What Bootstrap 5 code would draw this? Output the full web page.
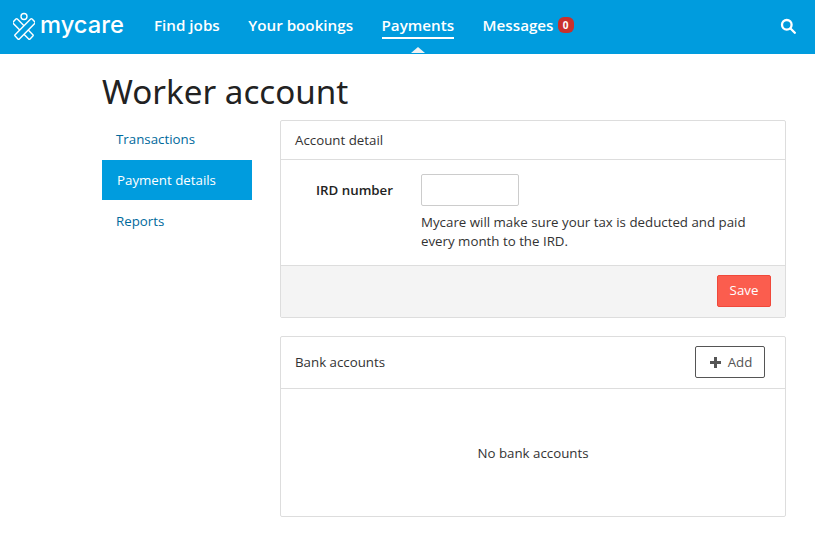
<!DOCTYPE html>
<html lang="en">
<head>
<meta charset="utf-8">
<title>Worker account</title>
<link rel="stylesheet" href="https://cdn.jsdelivr.net/npm/bootstrap@5.3.0/dist/css/bootstrap.min.css">
<style>
html,body{height:533px;overflow:hidden}
body{font-family:"Open Sans",sans-serif;font-size:13.3px;color:#333;background:#fff}
.top-bar{height:54px;background:#009cde;padding:0 19px 0 13px}
.brand-link{color:#fff;text-decoration:none;font-family:"Inter",sans-serif;font-size:23.700px;font-weight:500;line-height:1;gap:5px;width:141px;margin-top:-2px}
.brand-link:hover{color:#fff}
.brand-link span{margin-top:-3px}
.brand-link svg{flex:none}
.top-links{gap:28.500px;height:54px}
.top-link{color:#fff;font-size:15.200px;font-weight:600;text-decoration:none;line-height:20px;padding-bottom:2px;border-bottom:2px solid transparent;position:relative;display:block}
.top-link:hover{color:#fff}
.top-link.on{border-bottom-color:#fff}
.top-link.on::after{content:"";position:absolute;left:50%;margin-left:-7px;top:32px;border:7px solid transparent;border-top:0;border-bottom:6px solid #f2f2f2}
.count-pill{background:#c9302c;color:#fff;font-size:10px;font-weight:700;border-radius:6px;padding:0;width:16px;height:16px;line-height:16px;text-align:center;margin-left:4px;display:inline-block;vertical-align:2px}
.find-icon{margin-top:-2px}
.page-wrap{padding:0 29px 0 102px}
.page-title{font-family:"Noto Sans",sans-serif;font-size:33.200px;font-weight:400;color:#222;line-height:44px;margin:16px 0 6px}
.side-col{width:150px;flex:none;margin-right:28px;margin-top:-1px}
.side-link{display:block;height:40px;line-height:40px;padding-left:14px;margin-bottom:1px;color:#006a9c;text-decoration:none}
.side-link.on{background:#009cde;color:#fff;padding-left:15px}
.main-col{flex:1;min-width:0}
.panel-box{border:1px solid #ddd;border-radius:2px;margin-bottom:18px;background:#fff}
.panel-head{height:39px;line-height:38px;padding:0 14px;border-bottom:1px solid #ddd;color:#333}
.panel-body{height:105px;padding:14px 0 0 35px}
.field-label{width:105px;flex:none;font-weight:600;margin-top:7px;line-height:18px;color:#222}
.ird-input{width:98px;height:32px;border:1px solid #ccc;border-radius:2px;padding:0 6px;display:block;margin-bottom:7px;outline:0}
.help-note{line-height:19px;margin:0;width:345px;color:#333}
.panel-foot{height:52px;background:#f4f4f4;border-top:1px solid #ddd;padding:9px 14px 0 0;text-align:right}
.save-btn{background:#fb5d4e;border:1px solid #f0483a;color:#fff;width:54px;height:32px;padding:0;font-size:13.300px;border-radius:2px}
.save-btn:hover{background:#fb5d4e;color:#fff}
.head-tall{height:52px;padding:9px 20px 0 14px;line-height:32px}
.add-btn{border:1px solid #555;color:#555;background:#fff;width:70px;height:32px;padding:1px 0 0 2px;font-size:13.300px;border-radius:2px;line-height:1}
.add-btn svg{margin-right:7px;vertical-align:-1px}
.empty-body{height:127px;line-height:128px;text-align:center}
</style>
</head>
<body>
<nav class="top-bar d-flex align-items-center">
  <a class="brand-link d-flex align-items-center" href="#">
    <svg width="22" height="28" viewBox="0 0 22 28" stroke="#fff" stroke-width="1.400" stroke-linejoin="round"><circle cx="11" cy="4.500" r="3" fill="none"/><rect x="-2" y="14" width="24" height="6" rx="1" fill="#009cde" transform="rotate(45 10 17)"/><rect x="0" y="14" width="24" height="6" rx="1" fill="#009cde" transform="rotate(-45 12 17)"/></svg>
    <span>mycare</span>
  </a>
  <div class="top-links d-flex align-items-center">
    <a class="top-link" href="#">Find jobs</a>
    <a class="top-link" href="#">Your bookings</a>
    <a class="top-link on" href="#">Payments</a>
    <a class="top-link" href="#">Messages<span class="count-pill">0</span></a>
  </div>
  <svg class="ms-auto find-icon" width="16" height="16" viewBox="0 0 16 16" fill="none" stroke="#fff" stroke-width="2.300"><circle cx="6.800" cy="6.800" r="4.800"/><path d="M10.500 10.500L14.800 14.800" stroke-linecap="round"/></svg>
</nav>
<div class="page-wrap">
  <h1 class="page-title">Worker account</h1>
  <div class="d-flex">
    <div class="side-col">
      <a class="side-link" href="#">Transactions</a>
      <a class="side-link on" href="#">Payment details</a>
      <a class="side-link" href="#">Reports</a>
    </div>
    <div class="main-col">
      <section class="panel-box">
        <div class="panel-head">Account detail</div>
        <div class="panel-body d-flex">
          <div class="field-label">IRD number</div>
          <div>
            <input class="ird-input" type="text" aria-label="IRD number">
            <p class="help-note">Mycare will make sure your tax is deducted and paid every month to the IRD.</p>
          </div>
        </div>
        <div class="panel-foot"><button class="btn save-btn" type="button">Save</button></div>
      </section>
      <section class="panel-box">
        <div class="panel-head head-tall d-flex justify-content-between">
          <span>Bank accounts</span>
          <button class="btn add-btn" type="button"><svg width="11" height="11" viewBox="0 0 11 11"><path d="M4 0h3v4h4v3H7v4H4V7H0V4h4z" fill="#555"/></svg>Add</button>
        </div>
        <div class="empty-body">No bank accounts</div>
      </section>
    </div>
  </div>
</div>
</body>
</html>
